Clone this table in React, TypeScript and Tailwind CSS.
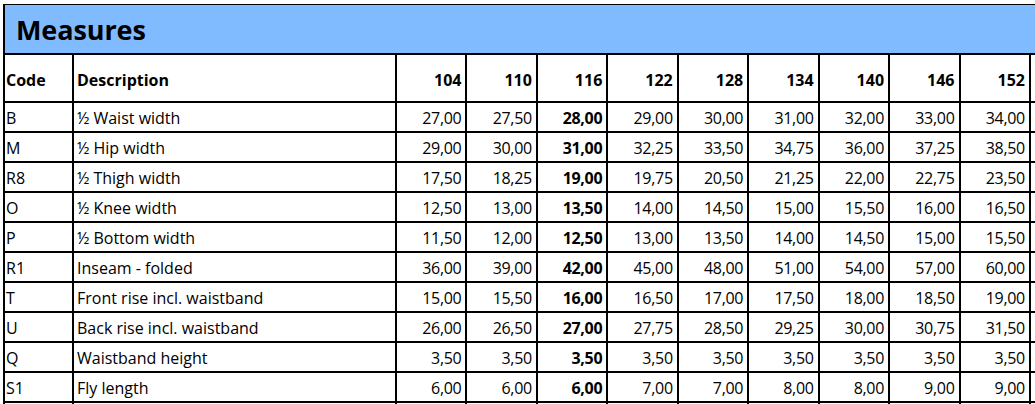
import React from 'react';

const sizes = ['104', '110', '116', '122', '128', '134', '140', '146', '152'];

const rows: [string, string, string[]][] = [
  ['B', '½ Waist width', ['27,00', '27,50', '28,00', '29,00', '30,00', '31,00', '32,00', '33,00', '34,00']],
  ['M', '½ Hip width', ['29,00', '30,00', '31,00', '32,25', '33,50', '34,75', '36,00', '37,25', '38,50']],
  ['R8', '½ Thigh width', ['17,50', '18,25', '19,00', '19,75', '20,50', '21,25', '22,00', '22,75', '23,50']],
  ['O', '½ Knee width', ['12,50', '13,00', '13,50', '14,00', '14,50', '15,00', '15,50', '16,00', '16,50']],
  ['P', '½ Bottom width', ['11,50', '12,00', '12,50', '13,00', '13,50', '14,00', '14,50', '15,00', '15,50']],
  ['R1', 'Inseam - folded', ['36,00', '39,00', '42,00', '45,00', '48,00', '51,00', '54,00', '57,00', '60,00']],
  ['T', 'Front rise incl. waistband', ['15,00', '15,50', '16,00', '16,50', '17,00', '17,50', '18,00', '18,50', '19,00']],
  ['U', 'Back rise incl. waistband', ['26,00', '26,50', '27,00', '27,75', '28,50', '29,25', '30,00', '30,75', '31,50']],
  ['Q', 'Waistband height', ['3,50', '3,50', '3,50', '3,50', '3,50', '3,50', '3,50', '3,50', '3,50']],
  ['S1', 'Fly length', ['6,00', '6,00', '6,00', '7,00', '7,00', '8,00', '8,00', '9,00', '9,00']],
];

const font = { fontFamily: '"Open Sans", "Noto Sans", sans-serif' };

export default function App() {
  return (
    <div className="w-[1035px] h-[404px] overflow-hidden bg-white text-black" style={font}>
      <div className="ml-[3px] mt-[4px] w-[1120px] bg-black pl-[2px] pt-[1px] grid gap-[2px] grid-cols-[67px_321px_repeat(9,68.44px)_80px]">
        {/* title band */}
        <div className="col-span-full h-[48px] bg-[#80bbff] flex items-center pl-[11px] pt-[3px]">
          <h1 className="text-[27px] font-bold tracking-[-0.1px]">Measures</h1>
        </div>

        {/* header row */}
        <div className="h-[46px] bg-white flex items-end pb-[9px] pl-[1px] text-[16px] font-bold">Code</div>
        <div className="h-[46px] bg-white flex items-end pb-[9px] pl-[3px] text-[16px] font-bold">Description</div>
        {sizes.map((s) => (
          <div key={s} className="h-[46px] bg-white flex items-end justify-end pb-[9px] pr-[4px] text-[16px] font-bold">
            {s}
          </div>
        ))}
        <div className="h-[46px] bg-white" />

        {/* data rows */}
        {rows.map(([code, desc, vals]) => (
          <React.Fragment key={code}>
            <div className="h-[28px] bg-white flex items-center pt-[2px] pl-[1px] text-[16px]">{code}</div>
            <div className="h-[28px] bg-white flex items-center pt-[2px] pl-[3px] text-[16px]">{desc}</div>
            {vals.map((v, i) => (
              <div
                key={i}
                className={`h-[28px] bg-white flex items-center justify-end pt-[2px] pr-[4px] text-[16px] tracking-[-0.3px] ${i === 2 ? 'font-bold' : ''}`}
              >
                {v}
              </div>
            ))}
            <div className="h-[28px] bg-white" />
          </React.Fragment>
        ))}

        {/* next row, cut off by the window */}
        {Array.from({ length: 12 }).map((_, i) => (
          <div key={i} className="h-[28px] bg-white" />
        ))}
      </div>
    </div>
  );
}
